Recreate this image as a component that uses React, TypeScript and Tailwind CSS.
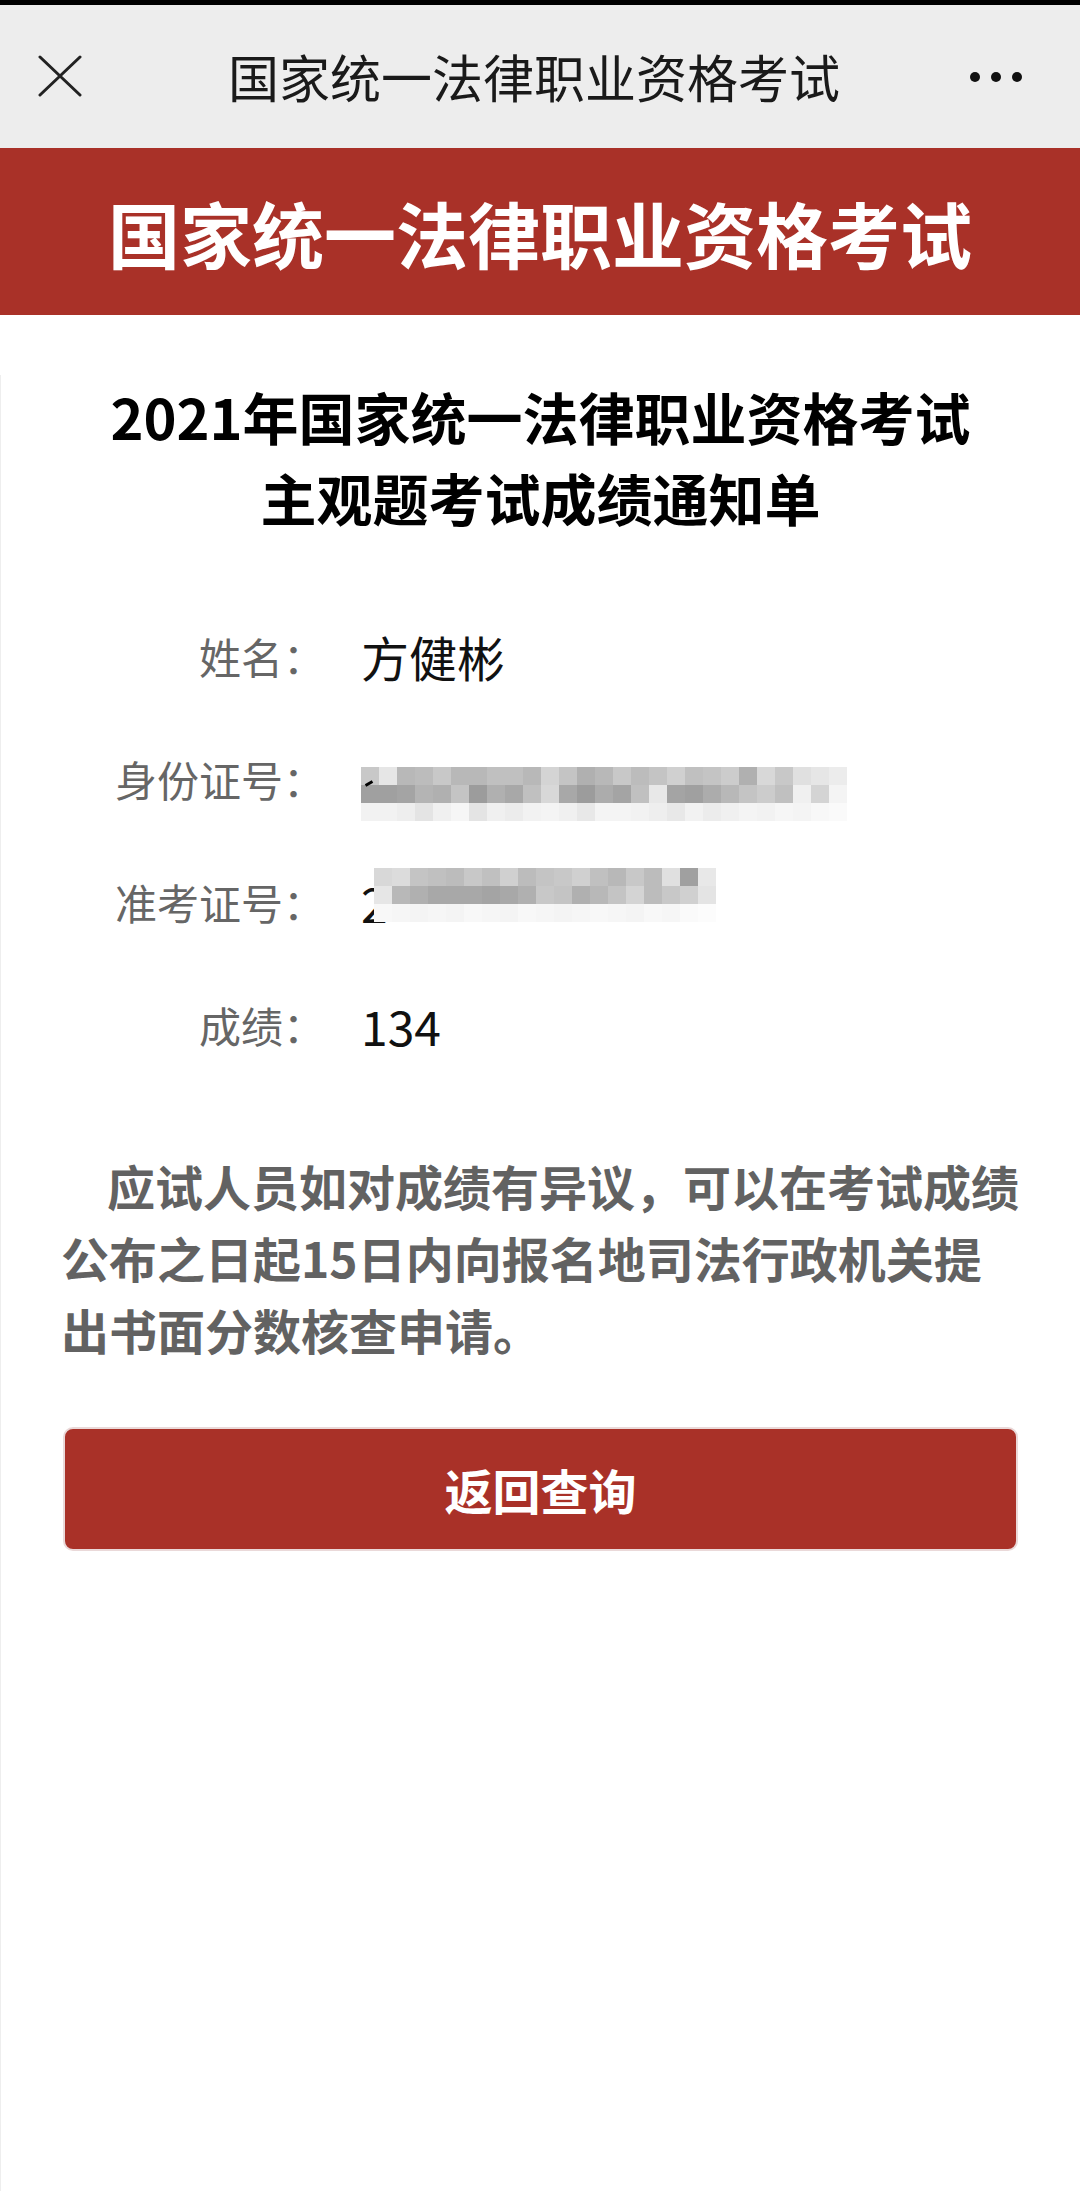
import React from "react";

const ID_ROWS: string[][] = [
  ["c8","e6","b8","bc","c8","b8","b8","c0","c0","b8","d4","c4","b0","b8","c8","bc","c4","d0","c0","c4","cc","b0","d8","c8","e0","e6","ec"],
  ["a0","a0","a4","b4","b0","c4","9c","b0","a8","c0","d8","a8","9c","ac","a4","c0","e8","a4","a0","ac","b8","c4","cc","c0","f0","d4","f4"],
  ["f2","f2","ee","e4","f0","f6","e4","f0","ec","f2","f4","f0","e8","f4","f4","f2","ee","e8","f2","ec","f0","f4","f2","f6","f4","f8","fa"],
];

const ADM_ROWS: string[][] = [
  ["d8","dc","c4","c0","bc","c8","c0","d0","bc","c4","c8","d0","c0","b8","c8","bc","e0","a0","e8"],
  ["e6","b8","b0","a8","a8","a8","a4","a8","b0","c8","c4","b0","b8","c4","d4","bc","c8","d0","e4"],
  ["f8","f6","f4","f6","f4","f8","f6","f4","f8","f6","f4","f6","f8","f6","f4","f8","f6","fa","fc"],
];

function Mosaic({ rows, top, height }: { rows: string[][]; top: number; height: number }) {
  const cols = rows[0].length;
  return (
    <svg width={cols * 18} height={height} viewBox={`0 0 ${cols * 18} ${height}`}>
      {rows.map((r, ri) =>
        r.map((c, ci) => (
          <rect key={`${ri}-${ci}`} x={ci * 18} y={top + ri * 18} width={18} height={18} fill={`#${c}${c}${c}`} />
        ))
      )}
    </svg>
  );
}

function Row({ label, children }: { label: string; children: React.ReactNode }) {
  return (
    <div className="flex h-[123px] items-center">
      <div className="w-[324px] shrink-0 text-right text-[42px] leading-none text-[#666666]">{label}</div>
      <div className="ml-[36px] flex items-center text-[48px] leading-none text-[#111111]">{children}</div>
    </div>
  );
}

export default function App() {
  return (
    <div className="min-h-[2195px] w-[1080px] bg-white font-['Noto_Sans_CJK_SC','Noto_Sans',sans-serif]">
      <div className="h-[5px] bg-black" />
      <div className="flex h-[143px] items-center bg-[#ededed]">
        <div className="flex w-[120px] items-center justify-center">
          <svg width="44" height="44" viewBox="0 0 44 44">
            <path d="M2 2 L42 40 M42 2 L2 40" stroke="#222222" strokeWidth="3" strokeLinecap="round" fill="none" />
          </svg>
        </div>
        <div className="flex-1 pr-[12px] text-center text-[51px] leading-none text-[#1a1a1a]">国家统一法律职业资格考试</div>
        <div className="flex w-[120px] items-center justify-start gap-[11px] pl-[10px]">
          <span className="h-[10px] w-[10px] rounded-full bg-[#111111]" />
          <span className="h-[10px] w-[10px] rounded-full bg-[#111111]" />
          <span className="h-[10px] w-[10px] rounded-full bg-[#111111]" />
        </div>
      </div>
      <div className="flex h-[167px] items-center justify-center bg-[#a93128] text-[72px] font-bold leading-none text-white">
        国家统一法律职业资格考试
      </div>

      <div className="border-l border-[#eeeeee]">
        <div className="mt-[60px] text-center text-[56px] font-bold leading-[81px] text-black">
          <div>2021年国家统一法律职业资格考试</div>
          <div>主观题考试成绩通知单</div>
        </div>

        <div className="mt-[57px]">
          <Row label="姓名：">方健彬</Row>
          <Row label="身份证号：">
            <div className="relative mt-[16px]">
              <Mosaic rows={ID_ROWS} top={25} height={90} />
              <span className="absolute left-[4px] top-[40px] h-[3px] w-[8px] -rotate-[30deg] bg-black" />
            </div>
          </Row>
          <Row label="准考证号：">
            <div className="relative">
              <span className="text-[48px] leading-none">2</span>
              <div className="absolute left-[13px] top-[-12px]">
                <Mosaic rows={ADM_ROWS} top={2} height={60} />
              </div>
            </div>
          </Row>
          <Row label="成绩：">134</Row>
        </div>

        <div className="mx-[60px] mt-[63px] whitespace-nowrap text-[48px] font-bold leading-[72px] text-[#626262]">
          <div className="pl-[46px]">应试人员如对成绩有异议，可以在考试成绩</div>
          <div>公布之日起15日内向报名地司法行政机关提</div>
          <div>出书面分数核查申请。</div>
        </div>

        <div className="mx-[62px] mt-[62px] flex h-[124px] items-center justify-center rounded-[10px] border-2 border-[#ead9d9] bg-[#a93128] text-[48px] font-bold leading-none text-white">
          返回查询
        </div>
        <div className="h-[640px]" />
      </div>
    </div>
  );
}
